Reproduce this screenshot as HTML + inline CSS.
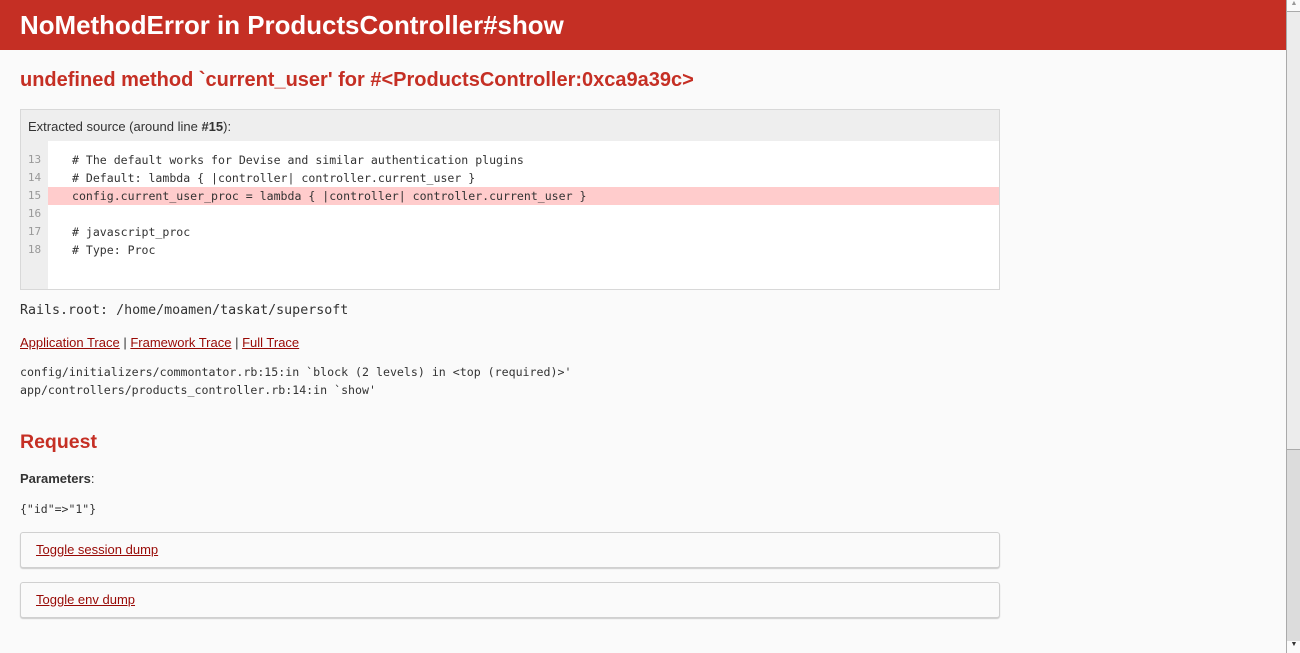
<!DOCTYPE html>
<html><head><style>
body{margin:0;background:#fafafa;font-family:"Liberation Sans",sans-serif;color:#333;width:1300px;height:653px;overflow:hidden;position:relative}
header{position:absolute;left:0;top:0;width:1286px;height:50px;background:#c52f24;color:#fff}
header h1{margin:0;font-size:25.9px;font-weight:bold;position:absolute;left:20px;top:12px}
.abs{position:absolute}
h2{margin:0;color:#c52f24;font-size:20px;font-weight:bold}
.box{left:20px;top:109px;width:978px;height:179px;border:1px solid #d8d8d8;background:#eee}
.box .t{position:absolute;left:7px;top:9px;font-size:13px}
.code{position:absolute;left:27px;top:31px;width:951px;height:148px;background:#fff}
.ln{position:absolute;left:0;top:41px;width:27px;font:11px/18px "DejaVu Sans Mono",monospace;color:#999;text-align:center}
.src{position:absolute;left:27px;top:41px;width:951px;font:11.55px/18px "DejaVu Sans Mono",monospace;color:#333;white-space:pre}
.src div{padding-left:24px;height:18px}
.hl{background:#fcc}
.mono{font-family:"DejaVu Sans Mono",monospace}
a{color:#980905}
.tg{left:20px;width:978px;height:34px;border:1px solid #d0d0d0;border-radius:3px;box-shadow:0 1px 1px #ccc;background:#fafafa}
.tg a{position:absolute;left:15px;top:9px;font-size:13px}
.sb{left:1286px;top:0;width:14px;height:653px;background:#ececec;border-left:1px solid #aaa}
</style></head><body>
<header><h1>NoMethodError in ProductsController#show</h1></header>
<h2 class="abs" style="left:20px;top:69px">undefined method `current_user' for #&lt;ProductsController:0xca9a39c&gt;</h2>
<div class="abs box"><div class="t">Extracted source (around line <b>#15</b>):</div>
<div class="code"></div>
<div class="ln">13<br>14<br>15<br>16<br>17<br>18</div>
<div class="src"><div># The default works for Devise and similar authentication plugins</div><div># Default: lambda { |controller| controller.current_user }</div><div class="hl">config.current_user_proc = lambda { |controller| controller.current_user }</div><div></div><div># javascript_proc</div><div># Type: Proc</div></div>
</div>
<div class="abs mono" style="left:20px;top:303px;font-size:13.3px">Rails.root: /home/moamen/taskat/supersoft</div>
<div class="abs" style="left:20px;top:335px;font-size:13px"><a href="#">Application Trace</a> | <a href="#">Framework Trace</a> | <a href="#">Full Trace</a></div>
<div class="abs mono" style="left:20px;top:363px;font-size:11.6px;line-height:18px">config/initializers/commontator.rb:15:in `block (2 levels) in &lt;top (required)&gt;'<br>app/controllers/products_controller.rb:14:in `show'</div>
<h2 class="abs" style="left:20px;top:431px;font-size:19.5px">Request</h2>
<div class="abs" style="left:20px;top:471px;font-size:13px"><b>Parameters</b>:</div>
<div class="abs mono" style="left:20px;top:502px;font-size:11.5px">{"id"=&gt;"1"}</div>
<div class="abs tg" style="top:532px"><a href="#">Toggle session dump</a></div>
<div class="abs tg" style="top:582px"><a href="#">Toggle env dump</a></div>
<div class="abs sb">
<div class="abs" style="left:0;top:0;width:14px;height:11px;background:#fafafa;border-bottom:1px solid #aaa;font-size:7px;color:#999;text-align:center">▲</div>
<div class="abs" style="left:0;top:449px;width:14px;height:191px;background:#dcdcdc;border-top:1px solid #aaa"></div>
<div class="abs" style="left:0;top:641px;width:14px;height:12px;font-size:7px;text-align:center;background:#fafafa">▼</div>
</div>
</body></html>
